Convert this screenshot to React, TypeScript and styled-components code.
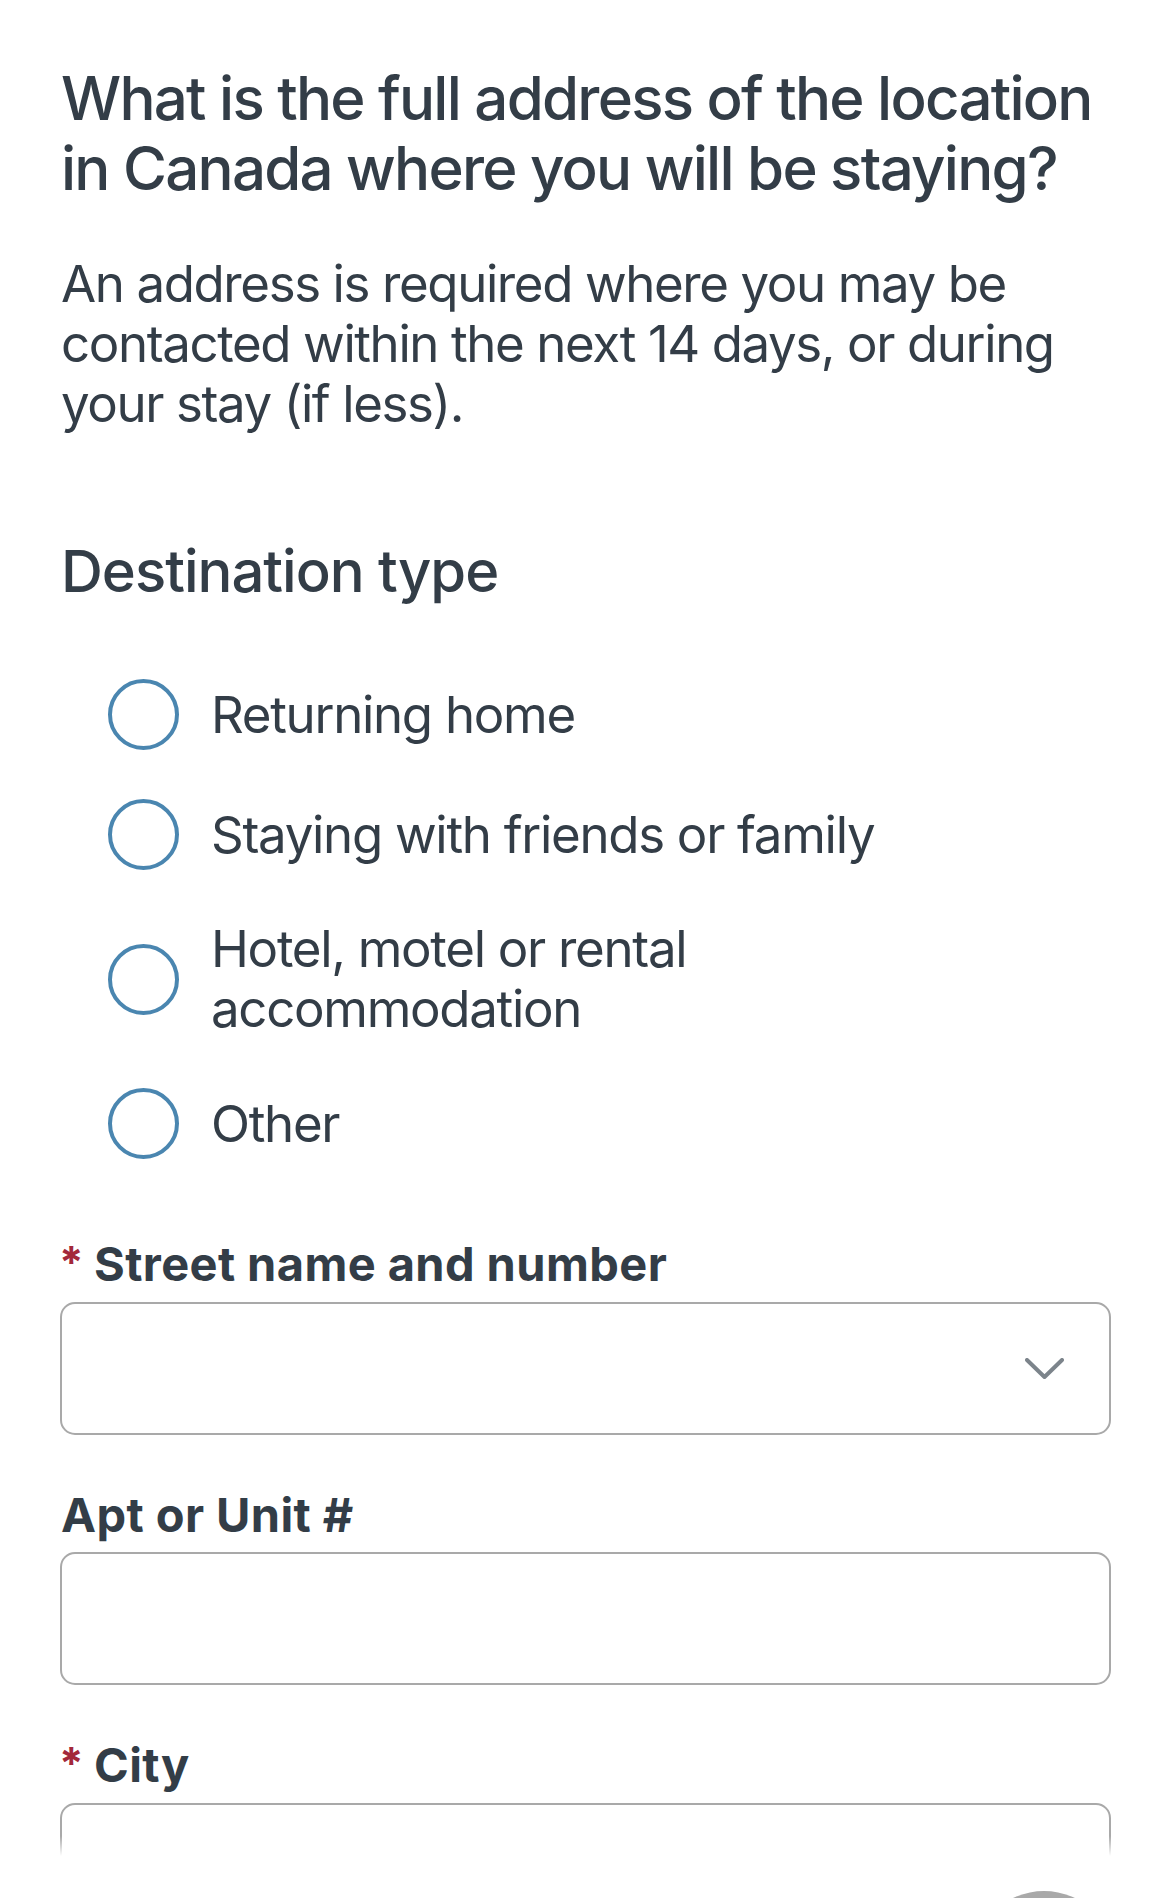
import React from 'react';
import styled, { createGlobalStyle } from 'styled-components';

const GlobalStyle = createGlobalStyle`
  * { box-sizing: border-box; }
  body {
    margin: 0;
    background: #ffffff;
    font-family: Inter, "Noto Sans", "Liberation Sans", sans-serif;
    color: #333d47;
  }
`;

const options = [
  'Returning home',
  'Staying with friends or family',
  'Hotel, motel or rental accommodation',
  'Other',
];

const fields = [
  { label: 'Street name and number', required: true, select: true },
  { label: 'Apt or Unit #', required: false, select: false },
  { label: 'City', required: true, select: false },
];

export default function App() {
  return (
    <>
      <GlobalStyle />
      <Page>
        <Question>What is the full address of the location in Canada where you will be staying?</Question>
        <Intro>
          An address is required where you may be contacted within the next 14 days, or during your stay (if less).
        </Intro>

        <Legend>Destination type</Legend>
        <RadioList>
          {options.map((opt) => (
            <RadioRow key={opt}>
              <RadioCircle />
              <RadioText>{opt}</RadioText>
            </RadioRow>
          ))}
        </RadioList>

        <Fields>
          {fields.map((f) => (
            <FieldGroup key={f.label}>
              <Label>
                {f.required && <Star>*</Star>}
                {f.label}
              </Label>
              <InputBox>
                {f.select && (
                  <Chevron width="39" height="22" viewBox="0 0 39 22">
                    <polyline points="2,2 19.5,19 37,2" />
                  </Chevron>
                )}
              </InputBox>
            </FieldGroup>
          ))}
        </Fields>

        <BottomFade />
        <FloatingButton />
      </Page>
    </>
  );
}

const Page = styled.div`
  position: relative;
  width: 1170px;
  height: 1898px;
  overflow: hidden;
  padding: 63px 59px 0 60px;
`;

const Question = styled.h1`
  margin: 0 0 0 1px;
  font-size: 60px;
  line-height: 70px;
  font-weight: 500;
  letter-spacing: -1.75px;
  color: #333d47;
`;

const Intro = styled.p`
  margin: 51px 0 0 1px;
  font-size: 51px;
  line-height: 60px;
  font-weight: 400;
  letter-spacing: -1.4px;
`;

const Legend = styled.h2`
  margin: 102px 0 0 1px;
  font-size: 58px;
  line-height: 70px;
  font-weight: 500;
  letter-spacing: -1px;
`;

const RadioList = styled.div`
  display: flex;
  flex-direction: column;
  gap: 49px;
  margin-top: 73px;
  padding-left: 48px;
`;

const RadioRow = styled.label`
  display: flex;
  align-items: center;
  gap: 32px;
`;

const RadioCircle = styled.span`
  flex: none;
  width: 71px;
  height: 71px;
  border-radius: 50%;
  border: 4px solid #4a86b0;
  background: #fff;
`;

const RadioText = styled.span`
  font-size: 51px;
  line-height: 60px;
  max-width: 740px;
  letter-spacing: -1.3px;
`;

const Fields = styled.div`
  display: flex;
  flex-direction: column;
  gap: 52px;
  margin-top: 77px;
`;

const FieldGroup = styled.div`
  display: flex;
  flex-direction: column;
  gap: 9px;
`;

const Label = styled.div`
  display: flex;
  align-items: baseline;
  padding-left: 1px;
  font-size: 47px;
  line-height: 56px;
  font-weight: 700;
  letter-spacing: 0.4px;
`;

const Star = styled.span`
  color: #a3283a;
  font-size: 44px;
  margin-right: 10px;
  margin-left: -2px;
  position: relative;
  top: -3px;
`;

const InputBox = styled.div`
  position: relative;
  height: 133px;
  border: 2px solid #a9a9a9;
  border-radius: 15px;
  background: #fff;
`;

const Chevron = styled.svg`
  position: absolute;
  right: 45px;
  top: 50%;
  transform: translateY(-50%);
  fill: none;
  stroke: #7c848b;
  stroke-width: 4;
  stroke-linecap: round;
  stroke-linejoin: round;
`;

const BottomFade = styled.div`
  position: absolute;
  left: 0;
  right: 0;
  top: 1836px;
  bottom: 0;
  background: linear-gradient(to bottom, rgba(255, 255, 255, 0) 0px, #ffffff 20px);
`;

const FloatingButton = styled.div`
  position: absolute;
  left: 972px;
  top: 1891px;
  width: 144px;
  height: 144px;
  border-radius: 50%;
  background: #a9a9a9;
`;
